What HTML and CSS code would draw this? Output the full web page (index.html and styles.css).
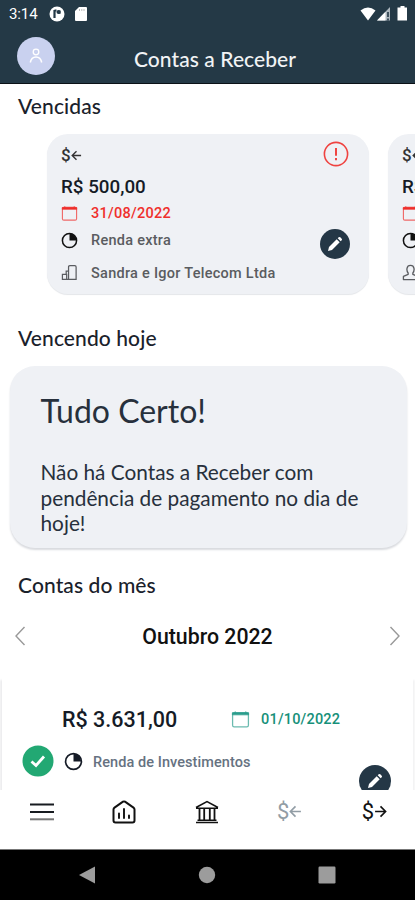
FILE: index.html
```html
<!DOCTYPE html>
<html lang="pt-BR">
<head>
<meta charset="utf-8">
<title>Contas a Receber</title>
<link rel="stylesheet" href="styles.css">
</head>
<body>
<svg class="sprite" aria-hidden="true">
  <symbol id="calendar" viewBox="0 0 18 18"><rect x="1.5" y="2.5" width="15" height="13.500" rx="1.5" fill="none" stroke="currentColor" stroke-width="1.2" opacity=".7"/><path d="M1.300 2.600h15.400v2H1.300zM4 1.200v2M14 1.200v2" fill="currentColor" stroke="currentColor" stroke-width=".7"/></symbol>
  <symbol id="pie" viewBox="0 0 18 18"><circle cx="9" cy="9" r="7.5" fill="none" stroke="currentColor" stroke-width="1.6"/><path d="M9 9V1.7A7.3 7.3 0 0 1 16.3 9z" fill="currentColor"/></symbol>
  <symbol id="building" viewBox="0 0 18 18"><path d="M8 16.2V3.2Q8 1.8 9.4 1.8h5.200Q16 1.800 16 3.200v13zM8 7.500H5.500v3.500M8 16.200H1.500V11H6v5" fill="none" stroke="currentColor" stroke-width="1.3"/></symbol>
  <symbol id="person" viewBox="0 0 18 18"><path d="M6.500 11V9.500C4.500 7 4.500 1.500 9 1.500s4.500 5.500 2.500 8V11l5 2.200V16.500H1.500v-3.300z" fill="none" stroke="currentColor" stroke-width="1.400" stroke-linejoin="round"/></symbol>
  <symbol id="pencil" viewBox="0 0 16 16"><path d="M1 15l1-4 7.700-7.700 3 3L5 14zM10.700 2.300l1-1q.8-.7 1.600 0L14.700 2.700q.7.800 0 1.600l-1 1z" fill="currentColor"/></symbol>
  <symbol id="arrow" viewBox="0 0 12 12"><path d="M11 6H1.300M6 1.300L1.300 6 6 10.700" fill="none" stroke="currentColor" stroke-width="1.500"/></symbol>
</svg>
<div class="phone">
  <div class="status">
    <span class="clock">3:14</span>
    <svg class="app-badge" viewBox="0 0 16 16"><circle cx="8" cy="8" r="7.500" fill="#fff"/><path d="M5.500 12V4M5.500 4.500h2M10.500 4.500v3.200" fill="none" stroke="#243946" stroke-width="2.200"/><circle cx="9.500" cy="6" r="2" fill="#243946"/></svg>
    <svg class="sd" viewBox="0 0 12 14"><path d="M4 0h7q1 0 1 1v12q0 1-1 1H1q-1 0-1-1V4z" fill="#fff"/><path d="M4.500 2v2M6.800 2v2M9 2v2" stroke="#bbb"/></svg>
    <svg class="signals" viewBox="0 0 48 16"><path d="M.5 4.500Q8 -1.500 15.500 4.500L8 14.500z" fill="#fff"/><path d="M17 14.500L30 1v13.500z" fill="#aeb8bf"/><path d="M17 14.500L25.500 5.700v8.800z" fill="#fff"/><path d="M28 6v5M28 12.500v2" stroke="#243946" stroke-width="1.600"/><path d="M40.500 0h4v1.500h2.500v13h-9.500v-13h3z" fill="#fff"/></svg>
  </div>
  <header class="header">
    <svg class="avatar" viewBox="0 0 38 38"><circle cx="19" cy="19" r="19" fill="#c9d1ef"/><circle cx="19" cy="15" r="2.800" fill="none" stroke="#fff" stroke-width="1.300"/><path d="M13.300 25.500q1-5.500 5.700-5.500t5.700 5.500" fill="none" stroke="#fff" stroke-width="1.500"/></svg>
    <h1>Contas a Receber</h1>
  </header>
  <main class="content">
    <h2 class="h-overdue">Vencidas</h2>
    <div class="carousel">
      <article class="bill">
        <div class="money"><span>$</span><svg><use href="#arrow"/></svg></div>
        <div class="amount">R$ 500,00</div>
        <div class="line date"><svg><use href="#calendar"/></svg><span>31/08/2022</span></div>
        <div class="line kind"><svg><use href="#pie"/></svg><span>Renda extra</span></div>
        <div class="line payer"><svg><use href="#building"/></svg><span>Sandra e Igor Telecom Ltda</span></div>
        <svg class="alert" viewBox="0 0 26 26"><circle cx="13" cy="13" r="11.600" fill="none" stroke="#ef4340" stroke-width="1.600"/><path d="M13 7v7.800M13 17v2.200" stroke="#ef3430" stroke-width="1.800"/></svg>
        <span class="edit"><svg><use href="#pencil"/></svg></span>
      </article>
      <article class="bill">
        <div class="money"><span>$</span><svg><use href="#arrow"/></svg></div>
        <div class="amount">R$</div>
        <div class="line date"><svg><use href="#calendar"/></svg></div>
        <div class="line kind"><svg><use href="#pie"/></svg></div>
        <div class="line payer"><svg><use href="#person"/></svg></div>
      </article>
    </div>
    <h2 class="h-today">Vencendo hoje</h2>
    <section class="notice">
      <h3>Tudo Certo!</h3>
      <p>Não há Contas a Receber com<br>pendência de pagamento no dia de<br>hoje!</p>
    </section>
    <h2 class="h-month">Contas do mês</h2>
    <div class="month">
      <svg viewBox="0 0 12 20"><path d="M10.500 1L2 10l8.500 9"/></svg>
      <strong>Outubro 2022</strong>
      <svg viewBox="0 0 12 20"><path d="M1.500 1L10 10l-8.500 9"/></svg>
    </div>
    <article class="entry">
      <div class="entry-top">
        <span class="entry-amount">R$ 3.631,00</span>
        <svg><use href="#calendar"/></svg>
        <span class="entry-date">01/10/2022</span>
      </div>
      <div class="entry-bottom">
        <svg class="check" viewBox="0 0 32 32"><circle cx="16" cy="16" r="15.500" fill="#22a873"/><path d="M9.500 16.500l4.500 4 8-9" fill="none" stroke="#fff" stroke-width="2.800"/></svg>
        <svg class="pie"><use href="#pie"/></svg>
        <span class="entry-kind">Renda de Investimentos</span>
      </div>
      <span class="edit"><svg><use href="#pencil"/></svg></span>
    </article>
  </main>
  <nav class="tabs">
    <svg class="menu" viewBox="0 0 24 18"><path d="M0 1.500h24M0 9h24" stroke="#171b20" stroke-width="1.900"/><path d="M0 16.300h24" stroke="#777" stroke-width="2"/></svg>
    <svg class="home" viewBox="0 0 24 24"><path d="M1.500 9.500Q1.500 8.300 2.500 7.600L11 1.700q1-.6 2 0l8.500 5.900q1 .7 1 1.900v11q0 2-2 2h-17q-2 0-2-2z" fill="none" stroke="#111" stroke-width="2"/><path d="M7 13.500v4.500M12 9v9M17 15.500V18" stroke="#111" stroke-width="1.900" stroke-linecap="round"/></svg>
    <svg class="bank" viewBox="0 0 24 24"><path d="M1 7.500L12 1.500l11 6M1 8.200h22M1 22.500h22M2.500 20.200h19" fill="none" stroke="#111" stroke-width="1.500"/><path d="M4.500 8v13M9.200 8v13M14.800 8v13M19.500 8v13" stroke="#111" stroke-width="1.800"/></svg>
    <div class="money receive"><span>$</span><svg><use href="#arrow"/></svg></div>
    <div class="money pay"><span>$</span><svg><use href="#arrow"/></svg></div>
  </nav>
  <div class="system">
    <svg viewBox="0 0 18 18"><path d="M1 9L17 .5v17z"/></svg>
    <svg viewBox="0 0 18 18"><circle cx="9" cy="9" r="8.200"/></svg>
    <svg viewBox="0 0 18 18"><rect x=".5" y=".5" width="17" height="17" rx="1.200"/></svg>
  </div>
</div>
</body>
</html>
```
FILE: styles.css
```css
* { box-sizing: border-box; margin: 0; padding: 0; }
body { width: 415px; height: 900px; overflow: hidden; background: #fff; font-family: Roboto, sans-serif; color: #151b26; }
svg { display: block; flex: none; }
.sprite { display: none; }
.phone { width: 415px; height: 900px; display: flex; flex-direction: column; }

.status { height: 28px; flex: none; background: #243946; display: flex; align-items: center; padding: 0 7px 0 9px; color: #fff; }
.clock { font-size: 15px; line-height: 28px; width: 40px; letter-spacing: -.1px; }
.app-badge { width: 16px; height: 16px; margin-right: 10px; }
.sd { width: 12px; height: 14px; }
.signals { width: 48px; height: 16px; margin-left: auto; }

.header { height: 56px; flex: none; background: #243946; border-bottom: 1.500px solid #0b1116; display: grid; grid-template-columns: 38px 1fr 22px; padding: 9px 18px 0 17px; }
.avatar { width: 38px; height: 38px; }
h1 { font: 500 21px/44px Lato, sans-serif; letter-spacing: .08px; color: #f1f3f5; text-align: center; }

.content { height: 706px; flex: none; overflow: hidden; }
h2 { font: 500 21px/24px Lato, sans-serif; letter-spacing: .1px; padding-left: 18px; color: #1a212b; }
.h-overdue { padding-top: 10px; }
.carousel { display: flex; gap: 19px; padding: 16px 0 0 47px; }
.bill { position: relative; flex: none; width: 322px; height: 160px; background: #eff1f5; border-radius: 21px; padding: 9px 14px; box-shadow: 0 1px 1px #e4e6e9; }
.money { display: flex; align-items: center; height: 24px; font-size: 17px; color: #333; }
.bill .money { font-weight: 500; }
.bill .money svg { width: 11px; height: 11px; }
.amount { font-weight: 500; font-size: 18.800px; line-height: 36px; height: 33px; padding-top: 2px; }
.line { display: flex; align-items: center; gap: 13px; height: 27px; font-size: 14.500px; font-weight: 500; letter-spacing: .27px; color: #5a5c60; }
.line svg { width: 17px; height: 17px; }
.date { color: #ef2f2c; }
.kind svg { color: #111; }
.payer { height: 38px; }
.payer svg { margin-top: -2px; }
.alert { position: absolute; width: 26px; height: 26px; left: 276px; top: 7px; }
.edit { position: absolute; width: 30px; height: 30px; border-radius: 50%; background: #243746; color: #fff; display: grid; place-items: center; left: 273px; top: 95px; }
.edit svg { width: 16px; height: 16px; }

.h-today { padding-top: 32px; }
.notice { width: 397px; height: 182px; margin: 16px 0 0 9.500px; border-radius: 25px; background: #eff1f5; box-shadow: 0 2px 2px #d9dbdf; padding: 24px 31px; color: #27303c; }
h3 { font: 400 32px/42px Lato, sans-serif; }
.notice p { font: 400 20.800px/25.500px Lato, sans-serif; margin-top: 27px; white-space: nowrap; }
.h-month { padding-top: 25px; }
.month { height: 80px; display: flex; align-items: center; justify-content: space-between; padding: 0 14px 2px; }
.month svg { width: 12px; height: 20px; fill: none; stroke: #999; stroke-width: 1.400; }
.month strong { font-weight: 500; font-size: 21.300px; color: #111; }

.entry { position: relative; margin: 0 2px; height: 150px; box-shadow: -2px 3px 2px #ececee, 2px 3px 2px #f3f3f4; background: #fff; padding-top: 28px; }
.entry-top { display: flex; align-items: center; height: 28px; padding-left: 60px; }
.entry-top svg { width: 19px; height: 19px; color: #2b9d8d; margin-right: 11px; }
.entry-amount { width: 169px; font-size: 21.500px; font-weight: 500; }
.entry-date { font-size: 14.500px; font-weight: 500; letter-spacing: .2px; color: #169079; }
.entry-bottom { display: flex; align-items: center; padding: 12px 0 0 20px; height: 44px; }
.check { width: 32px; height: 32px; margin-right: 10px; }
.pie { width: 19px; height: 19px; margin-right: 10px; }
.entry-kind { font-size: 14.500px; font-weight: 500; letter-spacing: .07px; padding-top: 2px; color: #667281; }
.entry .edit { width: 32px; height: 32px; left: 357px; top: 88px; }

.tabs { height: 60px; flex: none; position: relative; background: #fff; display: flex; align-items: center; padding: 0 28px 16px 30px; border-bottom: 1px solid #777; }
.menu { width: 24px; height: 18px; margin-right: 58px; }
.home { width: 24px; height: 24px; margin-right: 59px; }
.bank { width: 24px; height: 24px; margin-right: 58px; }
.tabs .money { font-size: 22px; color: #111; }
.tabs .money svg { width: 13px; height: 13px; }
.tabs .receive { color: #929da5; margin-right: auto; }
.pay svg { transform: scaleX(-1); }
.system { height: 50px; flex: none; background: #000; display: flex; justify-content: space-between; align-items: center; padding: 0 79px 0 78px; }
.system svg { width: 18px; height: 18px; fill: #9c9c9c; }
```
